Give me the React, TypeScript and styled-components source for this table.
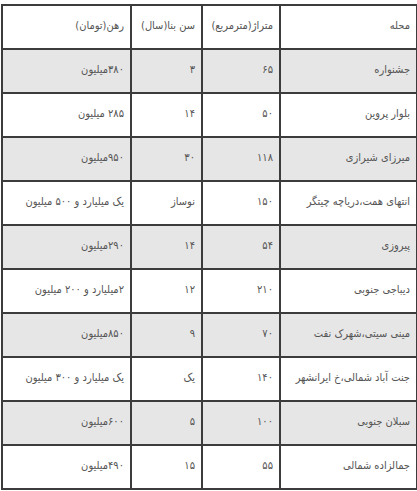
import React from "react";
import styled, { createGlobalStyle } from "styled-components";

const Global = createGlobalStyle`
  html, body { margin: 0; padding: 0; background: #fff; }
  body { font-family: "DejaVu Sans Condensed", "DejaVu Sans", "Noto Sans", sans-serif; }
`;

const Page = styled.div`
  padding: 4px 0 0 1px;
`;

const Table = styled.table`
  direction: rtl;
  width: 415px;
  border-collapse: collapse;
  table-layout: fixed;
  font-size: 11px;
  color: #555;
`;

const Row = styled.tr<{ $shaded?: boolean }>`
  height: 44px;
  background: ${(p) => (p.$shaded ? "#e6e6e6" : "#fff")};
`;

const Cell = styled.td`
  border: 2px solid #3c3c3c;
  padding: 0 6px 4px 4px;
  text-align: right;
  vertical-align: middle;
  white-space: nowrap;
  overflow: visible;
  font-stretch: condensed;
`;

const headers = ["محله", "متراژ(مترمربع)", "سن بنا(سال)", "رهن(تومان)"];

const rows: string[][] = [
  ["جشنواره", "۶۵", "۳", "۳۸۰میلیون"],
  ["بلوار پروین", "۵۰", "۱۴", "۲۸۵ میلیون"],
  ["میرزای شیرازی", "۱۱۸", "۳۰", "۹۵۰میلیون"],
  ["انتهای همت،دریاچه چیتگر", "۱۵۰", "نوساز", "یک میلیارد و ۵۰۰ میلیون"],
  ["پیروزی", "۵۴", "۱۴", "۲۹۰میلیون"],
  ["دیباجی جنوبی", "۲۱۰", "۱۲", "۲میلیارد و ۲۰۰ میلیون"],
  ["مینی سیتی،شهرک نفت", "۷۰", "۹", "۸۵۰میلیون"],
  ["جنت آباد شمالی،خ ایرانشهر", "۱۴۰", "یک", "یک میلیارد و ۳۰۰ میلیون"],
  ["سبلان جنوبی", "۱۰۰", "۵", "۶۰۰میلیون"],
  ["جمالزاده شمالی", "۵۵", "۱۵", "۴۹۰میلیون"],
];

const widths = [137, 78, 71, 129];

export default function App() {
  return (
    <>
      <Global />
      <Page>
        <Table>
          <colgroup>
            {widths.map((w, i) => (
              <col key={i} style={{ width: w }} />
            ))}
          </colgroup>
          <tbody>
            <Row>
              {headers.map((h) => (
                <Cell key={h}>{h}</Cell>
              ))}
            </Row>
            {rows.map((r, i) => (
              <Row key={i} $shaded={i % 2 === 0}>
                {r.map((c, j) => (
                  <Cell key={j}>{c}</Cell>
                ))}
              </Row>
            ))}
          </tbody>
        </Table>
      </Page>
    </>
  );
}
